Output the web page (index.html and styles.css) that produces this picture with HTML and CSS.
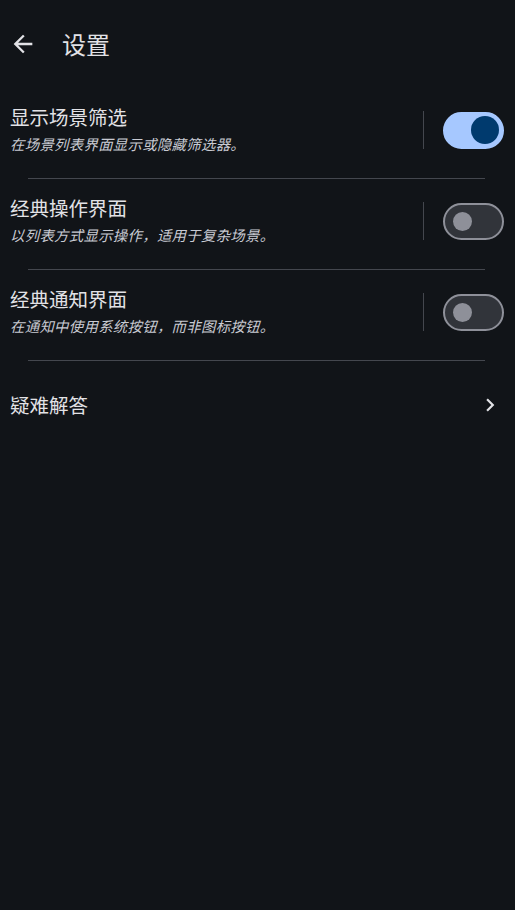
FILE: index.html
```html
<!DOCTYPE html>
<html lang="zh-CN">
<head>
  <meta charset="UTF-8" />
  <meta name="viewport" content="width=device-width, initial-scale=1.0"/>
  <title>设置</title>
  <link rel="stylesheet" href="styles.css">
</head>
<body>

  <!-- 顶部栏 -->
  <div class="topbar">
    <span class="back">
      <svg width="28" height="28" viewBox="0 0 24 24"><path d="M20 11H7.83l5.59-5.59L12 4l-8 8 8 8 1.41-1.41L7.83 13H20v-2z" fill="#e2e2e6"/></svg>
    </span>
    <h1>设置</h1>
  </div>

  <!-- 设置列表 -->
  <div class="list">
    <div class="row">
      <div class="text">
        <div class="title">显示场景筛选</div>
        <div class="desc">在场景列表界面显示或隐藏筛选器。</div>
      </div>
      <span class="sep"></span>
      <span class="switch on"><span class="knob"></span></span>
    </div>
    <div class="divider"></div>

    <div class="row">
      <div class="text">
        <div class="title">经典操作界面</div>
        <div class="desc">以列表方式显示操作，适用于复杂场景。</div>
      </div>
      <span class="sep"></span>
      <span class="switch"><span class="knob"></span></span>
    </div>
    <div class="divider"></div>

    <div class="row">
      <div class="text">
        <div class="title">经典通知界面</div>
        <div class="desc">在通知中使用系统按钮，而非图标按钮。</div>
      </div>
      <span class="sep"></span>
      <span class="switch"><span class="knob"></span></span>
    </div>
    <div class="divider"></div>

    <div class="row link">
      <div class="text">
        <div class="title">疑难解答</div>
      </div>
      <svg class="chevron" width="26" height="26" viewBox="0 0 24 24"><path d="M8.59 16.59L13.17 12 8.59 7.41 10 6l6 6-6 6-1.41-1.41z" fill="#e2e2e6"/></svg>
    </div>
  </div>

</body>
</html>
```

FILE: styles.css
```css
body {
  margin: 0;
  background: #111418;
  color: #e2e2e6;
  font-family: "Noto Sans CJK SC", "Noto Sans", sans-serif;
}
.topbar {
  display: flex;
  align-items: center;
  height: 88px;
  padding-left: 9px;
}
.back {
  display: flex;
  width: 28px;
  height: 28px;
}
.topbar h1 {
  margin: 0 0 0 25px;
  font-size: 24px;
  font-weight: 400;
  line-height: 32px;
}
.row {
  box-sizing: border-box;
  display: flex;
  align-items: center;
  height: 90px;
  padding: 0 11px 6px 10px;
}
.text {
  flex: 1;
  padding-bottom: 4px;
}
.title {
  font-size: 19.5px;
  line-height: 26px;
}
.desc {
  margin-top: 5px;
  font-size: 14.4px;
  letter-spacing: 0.3px;
  line-height: 18px;
  font-style: italic;
  color: #c8cad2;
}
.sep {
  width: 1px;
  height: 38px;
  background: #44474e;
  margin-right: 19px;
}
.switch {
  box-sizing: border-box;
  display: flex;
  align-items: center;
  width: 61px;
  height: 37px;
  border-radius: 19px;
  border: 2px solid #8e9099;
  background: #31343a;
  padding-left: 8px;
}
.switch .knob {
  width: 19px;
  height: 19px;
  border-radius: 50%;
  background: #8e9099;
}
.switch.on {
  border-color: #a6c8ff;
  background: #a6c8ff;
  justify-content: flex-end;
  padding: 0 3px 0 0;
}
.switch.on .knob {
  width: 28px;
  height: 28px;
  background: #003a6e;
}
.divider {
  height: 1px;
  background: #44474e;
  margin: 0 30px 0 28px;
}
.row.link {
  height: 88px;
  padding-bottom: 0;
}
.row.link .text {
  padding-bottom: 0;
}
.chevron {
  margin-right: 1px;
}
```
